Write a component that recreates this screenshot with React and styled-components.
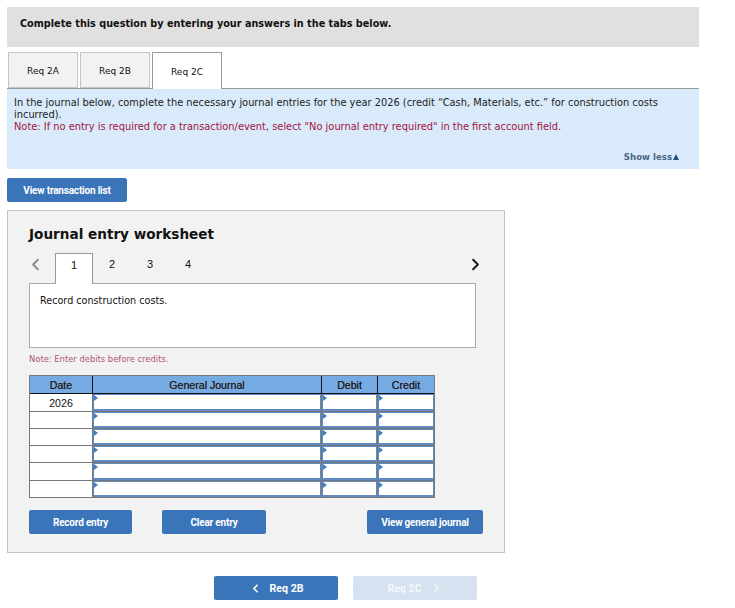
import React from 'react'
import styled, { createGlobalStyle } from 'styled-components'
import { ChevronLeft, ChevronRight } from 'lucide-react'

const GlobalStyle = createGlobalStyle`
  html, body {
    margin: 0;
    padding: 0;
    background: #fff;
    font-family: "DejaVu Sans", Verdana, sans-serif;
    color: #111;
  }
`

const Page = styled.div`
  width: 735px;
  height: 608px;
  padding: 7px 0 0 7px;
  box-sizing: border-box;
  overflow: hidden;
`

const Banner = styled.div`
  width: 692px;
  height: 40px;
  background: #e0e0e0;
  box-sizing: border-box;
  padding: 10px 13px;
  font-size: 9.7px;
  line-height: 14px;
  font-weight: bold;
`

const TabRow = styled.div`
  width: 692px;
  display: flex;
  gap: 2px;
  padding: 5px 0 0 1px;
  box-sizing: border-box;
  height: 42px;
  border-bottom: 1px solid #999;
`

const Tab = styled.div`
  width: 70px;
  height: ${p => (p.$active ? '37px' : '36px')};
  box-sizing: border-box;
  border: 1px solid ${p => (p.$active ? '#999' : '#c4c4c4')};
  border-bottom: ${p => (p.$active ? 'none' : '1px solid #c4c4c4')};
  background: ${p => (p.$active ? '#fff' : '#f2f2f2')};
  display: flex;
  align-items: center;
  justify-content: center;
  padding-top: 1px;
  font-size: 9px;
  position: relative;
  z-index: 1;
`

const InfoPanel = styled.div`
  width: 692px;
  height: 80px;
  background: #d9ebfa;
  box-sizing: border-box;
  padding: 8px 7px 0;
  font-size: 9.85px;
  line-height: 12px;
  position: relative;
`

const InfoText = styled.div`
  color: #1c1c1c;
`

const NoteText = styled.div`
  color: #a3123f;
`

const ShowLess = styled.div`
  position: absolute;
  right: 20px;
  bottom: 6px;
  display: flex;
  align-items: center;
  gap: 1px;
  font-size: 8.6px;
  font-weight: bold;
  color: #4a6585;
`

const UpArrow = styled.span`
  width: 0;
  height: 0;
  border-left: 3.5px solid transparent;
  border-right: 3.5px solid transparent;
  border-bottom: 6px solid #1f4f82;
`

const Button = styled.div`
  width: ${p => p.$width}px;
  height: 24px;
  background: ${p => (p.$disabled ? '#d6e2f0' : '#3a75b9')};
  color: ${p => (p.$disabled ? '#f4f7fb' : '#fff')};
  border-radius: 2px;
  display: flex;
  align-items: center;
  justify-content: center;
  gap: ${p => p.$gap || 0}px;
  font-family: Roboto, "Liberation Sans", sans-serif;
  font-size: ${p => (p.$nav ? '10.6px' : '10px')};
  letter-spacing: ${p => (p.$nav ? '0' : '-0.2px')};
  font-weight: 700;
  box-sizing: border-box;
`

const TopAction = styled.div`
  margin-top: 9px;
`

const Worksheet = styled.div`
  width: 498px;
  height: 343px;
  margin-top: 8px;
  box-sizing: border-box;
  background: #f2f2f2;
  border: 1px solid #c4c4c4;
  padding: 14px 21px 0;
`

const Title = styled.div`
  font-size: 13.6px;
  line-height: 18px;
  font-weight: bold;
  color: #111;
`

const StepRow = styled.div`
  width: 447px;
  height: 30px;
  margin-top: 10px;
  display: flex;
  align-items: flex-start;
  position: relative;
`

const PrevArrow = styled.div`
  width: 26px;
  padding-top: 2px;
  margin-left: -3px;
  margin-right: 3px;
  color: #8f8f8f;
  display: flex;
`

const NextArrow = styled.div`
  margin-left: auto;
  padding: 2px 0 0;
  margin-right: -9px;
  color: #222;
  display: flex;
`

const Step = styled.div`
  width: 38px;
  height: ${p => (p.$active ? '31px' : '30px')};
  box-sizing: border-box;
  display: flex;
  align-items: center;
  justify-content: center;
  padding-bottom: 8px;
  font-family: "Liberation Sans", Arial, sans-serif;
  font-size: 11px;
  background: ${p => (p.$active ? '#fff' : 'transparent')};
  border: ${p => (p.$active ? '1px solid #999' : 'none')};
  border-bottom: none;
  position: relative;
  z-index: 1;
`

const StepBox = styled.div`
  width: 447px;
  height: 65px;
  box-sizing: border-box;
  background: #fff;
  border: 1px solid #aaa;
  padding: 11px 10px;
  font-size: 9.65px;
  line-height: 12px;
`

const DebitNote = styled.div`
  margin-top: 6px;
  font-size: 8.4px;
  line-height: 11px;
  color: #b2566c;
`

const Table = styled.table`
  margin-top: 10px;
  width: 406px;
  table-layout: fixed;
  border-collapse: separate;
  border-spacing: 0;
  border: 1px solid #777;
  font-family: "Liberation Sans", Arial, sans-serif;
  font-size: 10.6px;
  background: #fff;
`

const HeadCell = styled.th`
  width: ${p => p.$width}px;
  height: 18px;
  box-sizing: border-box;
  padding: 0;
  background: #76aae3;
  font-weight: normal;
  text-shadow: 0 0 0.4px #333;
  color: #222;
  border-bottom: 1px solid #111;
  border-left: ${p => (p.$first ? 'none' : '1px solid #111')};
`

const DateCell = styled.td`
  height: ${p => p.$height}px;
  box-sizing: border-box;
  padding: 0;
  text-align: center;
  background: #fff;
  border-top: ${p => (p.$first ? 'none' : '1px solid #777')};
`

const EntryCell = styled.td`
  height: ${p => p.$height}px;
  box-sizing: border-box;
  padding: 0;
  background: #fff;
  border-left: 1px solid #777;
  border-top: ${p => (p.$first ? 'none' : '1px solid #777')};
  box-shadow: inset 1px 0 #5f8ac0, inset -1px 0 #5f8ac0, inset 0 1px #5f8ac0, inset 0 -2px #5f8ac0;
  position: relative;
`

const Marker = styled.span`
  position: absolute;
  left: 1px;
  top: 1px;
  width: 0;
  height: 0;
  border-top: 3px solid transparent;
  border-bottom: 3px solid transparent;
  border-left: 4px solid #3f80c4;
`

const ActionRow = styled.div`
  width: 454px;
  margin-top: 12px;
  display: flex;
  gap: 30px;
`

const PushRight = styled.div`
  margin-left: auto;
`

const BottomNav = styled.div`
  margin: 23px 0 0 207px;
  display: flex;
  gap: 15px;
`

const rows = [
  { date: '2026', height: 17 },
  { date: '', height: 17 },
  { date: '', height: 17 },
  { date: '', height: 17 },
  { date: '', height: 18 },
  { date: '', height: 17 },
]

const App = () => {
  return (
    <Page>
      <GlobalStyle />
      <Banner>Complete this question by entering your answers in the tabs below.</Banner>
      <TabRow>
        <Tab>Req 2A</Tab>
        <Tab>Req 2B</Tab>
        <Tab $active>Req 2C</Tab>
      </TabRow>
      <InfoPanel>
        <InfoText>
          In the journal below, complete the necessary journal entries for the year 2026 (credit “Cash, Materials, etc.” for construction costs incurred).
        </InfoText>
        <NoteText>
          Note: If no entry is required for a transaction/event, select "No journal entry required" in the first account field.
        </NoteText>
        <ShowLess>
          Show less
          <UpArrow />
        </ShowLess>
      </InfoPanel>
      <TopAction>
        <Button $width={120}>View transaction list</Button>
      </TopAction>
      <Worksheet>
        <Title>Journal entry worksheet</Title>
        <StepRow>
          <PrevArrow>
            <ChevronLeft size={19} strokeWidth={2.6} />
          </PrevArrow>
          <Step $active>1</Step>
          <Step>2</Step>
          <Step>3</Step>
          <Step>4</Step>
          <NextArrow>
            <ChevronRight size={19} strokeWidth={2.6} />
          </NextArrow>
        </StepRow>
        <StepBox>Record construction costs.</StepBox>
        <DebitNote>Note: Enter debits before credits.</DebitNote>
        <Table>
          <thead>
            <tr>
              <HeadCell $first $width={62}>Date</HeadCell>
              <HeadCell $width={229}>General Journal</HeadCell>
              <HeadCell $width={56}>Debit</HeadCell>
              <HeadCell $width={57}>Credit</HeadCell>
            </tr>
          </thead>
          <tbody>
            {rows.map((row, i) => (
              <tr key={i}>
                <DateCell $first={i === 0} $height={row.height}>{row.date}</DateCell>
                <EntryCell $first={i === 0} $height={row.height}><Marker /></EntryCell>
                <EntryCell $first={i === 0} $height={row.height}><Marker /></EntryCell>
                <EntryCell $first={i === 0} $height={row.height}><Marker /></EntryCell>
              </tr>
            ))}
          </tbody>
        </Table>
        <ActionRow>
          <Button $width={103}>Record entry</Button>
          <Button $width={104}>Clear entry</Button>
          <PushRight>
            <Button $width={116}>View general journal</Button>
          </PushRight>
        </ActionRow>
      </Worksheet>
      <BottomNav>
        <Button $nav $width={124} $gap={8}>
          <ChevronLeft size={13} strokeWidth={3} />
          Req 2B
        </Button>
        <Button $nav $width={124} $gap={8} $disabled>
          Req 2C
          <ChevronRight size={13} strokeWidth={3} />
        </Button>
      </BottomNav>
    </Page>
  )
}

export default App
